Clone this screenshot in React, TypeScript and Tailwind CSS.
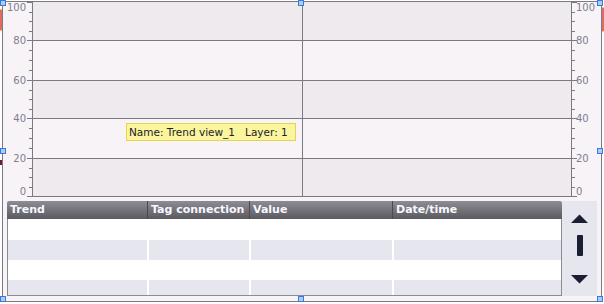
import React from "react"

const bands = [38, 40, 38, 40, 38]
const majors = [0, 38, 78, 116, 156, 194]
const labels = [100, 80, 60, 40, 20, 0]

const Axis = ({ side }: { side: "left" | "right" }) => {
  const ticks: { y: number; major: boolean }[] = []
  majors.forEach((y, i) => {
    ticks.push({ y, major: true })
    if (i < majors.length - 1) {
      const next = majors[i + 1]
      for (let k = 1; k < 4; k++) ticks.push({ y: Math.round(y + ((next - y) * k) / 4), major: false })
    }
  })
  const left = side === "left"

  return (
    <svg width="29" height="195" className="shrink-0">
      {ticks.map((t, i) => (
        <rect
          key={i}
          x={left ? (t.major ? 24 : 26) : 0}
          y={t.y}
          width={t.major ? 5 : 3}
          height="1"
          fill="#7b7a82"
        />
      ))}
      {labels.map((l, i) => (
        <text
          key={l}
          x={left ? 23 : 4}
          y={Math.min(Math.max(majors[i] + 4, 9), 193)}
          textAnchor={left ? "end" : "start"}
          className="fill-[#7e7e90] font-['DejaVu_Sans'] text-[10px]"
        >
          {l}
        </text>
      ))}
    </svg>
  )
}

const rows = [21, 20, 20, 15]
const columns = ["Trend", "Tag connection", "Value", "Date/time"]

const Handle = ({ x, y }: { x: string; y: string }) => (
  <span className={`absolute ${x} ${y} h-[6px] w-[6px] border border-[#3b78d8] bg-[#a9cdf7]`}></span>
)

const App = () => {
  return (
    <div className="relative h-[304px] w-[604px] overflow-hidden bg-white">
      <div className="ml-[2px] mt-[1px] flex h-[301px] w-[600px] flex-col border border-[#7b7a82] bg-[#f7f3f7]">
        {/* chart */}
        <div className="flex h-[195px]">
          <Axis side="left" />
          <div className="flex w-[540px] flex-col border-x border-b border-[#7b7a82]">
            {bands.map((h, i) => (
              <div
                key={i}
                style={{ height: h }}
                className={`grid shrink-0 grid-cols-[270px_1fr] ${i > 0 ? "border-t border-[#7b7a82]" : ""} ${i % 2 === 0 ? "bg-[#eeeaee]" : "bg-[#f7f3f7]"}`}
              >
                <div className="border-r border-[#7b7a82]"></div>
                <div></div>
              </div>
            ))}
          </div>
          <Axis side="right" />
        </div>

        {/* table */}
        <div className="flex pl-[4px] pt-[4px]">
          <div className="flex h-[95px] w-[555px] flex-col">
            <div className="grid h-[18px] shrink-0 grid-cols-[140px_102px_143px_1fr] rounded-t-[2px] bg-gradient-to-b from-[#8e8d93] to-[#5b5a60] font-['DejaVu_Sans'] text-[11px] font-bold leading-[17px] text-[#f6f8ff]">
              {columns.map((c, i) => (
                <div key={c} className={`pl-[3px] ${i > 0 ? "border-l border-[#4a4950] pl-[2px]" : ""}`}>
                  {c}
                </div>
              ))}
            </div>
            <div className="flex flex-1 flex-col overflow-hidden border-x border-b border-[#8c8b95]">
              {rows.map((h, i) => (
                <div
                  key={i}
                  style={{ height: h }}
                  className={`grid shrink-0 grid-cols-[139px_102px_143px_1fr] ${i % 2 === 0 ? "bg-white" : "bg-[#e6e6ee]"}`}
                >
                  <div></div>
                  <div className="border-l-2 border-white"></div>
                  <div className="border-l-2 border-white"></div>
                  <div className="border-l-2 border-white"></div>
                </div>
              ))}
            </div>
          </div>
          <div className="h-[95px] w-[35px] bg-[#e6e6ee]">
            <svg width="35" height="95">
              <polygon points="9,22 26,22 17.5,13.5" fill="#1b1f33" />
              <rect x="15" y="34" width="6" height="21" rx="1" fill="#1b1f33" />
              <polygon points="9,74 26,74 17.5,82.5" fill="#1b1f33" />
            </svg>
          </div>
        </div>
      </div>

      {/* name tooltip */}
      <div className="absolute left-[126px] top-[123px] h-[18px] w-[170px] whitespace-pre border border-[#e4d54c] bg-[#fbf59e] pl-[2px] font-['DejaVu_Sans'] text-[10.5px] leading-[16px] text-[#222228]">
        {"Name: Trend view_1   Layer: 1"}
      </div>

      {/* edge markers */}
      <span className="absolute left-0 top-[9px] h-[22px] w-[2px] border-y border-[#e8d840] bg-[#e46a6a]"></span>
      <span className="absolute right-0 top-[7px] h-[25px] w-[2px] border-y border-[#e8d840] bg-[#e46a6a]"></span>
      <span className="absolute left-0 top-[160px] h-[5px] w-[2px] bg-[#6a2026]"></span>

      <Handle x="left-0" y="top-0" />
      <Handle x="left-[298px]" y="top-0" />
      <Handle x="left-[597px]" y="top-0" />
      <Handle x="left-0" y="top-[148px]" />
      <Handle x="left-[597px]" y="top-[148px]" />
      <Handle x="left-0" y="top-[296px]" />
      <Handle x="left-[298px]" y="top-[296px]" />
      <Handle x="left-[597px]" y="top-[296px]" />
    </div>
  )
}

export default App
